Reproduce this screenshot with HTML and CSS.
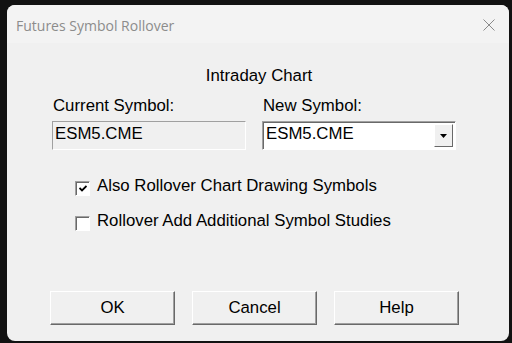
FILE: index.html
```html
<!DOCTYPE html>
<html lang="en">
<head>
  <meta charset="UTF-8" />
  <title>Futures Symbol Rollover</title>
  <link rel="stylesheet" href="styles.css">
</head>
<body>
  <div class="window">
    <div class="titlebar">
      <span class="title">Futures Symbol Rollover</span>
      <svg class="close" width="12" height="12" viewBox="0 0 12 12">
        <path d="M0.5 0.5 L11.5 11.5 M11.5 0.5 L0.5 11.5" stroke="#8a8a8a" stroke-width="1" fill="none"/>
      </svg>
    </div>
    <div class="content">
      <div class="heading">Intraday Chart</div>
      <div class="symbols">
        <div class="field">
          <label>Current Symbol:</label>
          <div class="readonly">ESM5.CME</div>
        </div>
        <div class="field">
          <label>New Symbol:</label>
          <div class="combo">
            <span>ESM5.CME</span>
            <div class="drop">
              <svg width="8" height="4" viewBox="0 0 8 4"><path d="M0 0 H7 L3.5 4 Z" fill="#000"/></svg>
            </div>
          </div>
        </div>
      </div>
      <div class="checks">
        <div class="check">
          <span class="box">
            <svg width="8" height="7" viewBox="0 0 8 7"><path d="M0.5 3 L3 5.5 L7.5 1" stroke="#000" stroke-width="1.8" fill="none"/></svg>
          </span>
          Also Rollover Chart Drawing Symbols
        </div>
        <div class="check">
          <span class="box"></span>
          Rollover Add Additional Symbol Studies
        </div>
      </div>
      <div class="buttons">
        <button>OK</button>
        <button>Cancel</button>
        <button>Help</button>
      </div>
    </div>
  </div>
</body>
</html>
```
FILE: styles.css
```css
html, body {
  margin: 0;
  background: #121212;
}
body {
  width: 512px;
  height: 343px;
  overflow: hidden;
}
.window {
  margin: 5px 0 0 7px;
  width: 502px;
  height: 336px;
  border-radius: 8px;
  background: #f0f0f0;
  overflow: hidden;
  font-family: "Liberation Sans", Arial, sans-serif;
  font-size: 16.8px;
  color: #000;
}
.titlebar {
  height: 38px;
  background: #f3f3f3;
  display: flex;
  align-items: center;
  justify-content: space-between;
  padding: 0 14px 0 9px;
}
.title {
  font-family: "Open Sans", "Noto Sans", sans-serif;
  font-size: 14px;
  color: #8c8c8c;
  margin-top: 2px;
}
.close { margin-top: 1px; }
.content {
  padding: 23px 0 0 45px;
}
.heading {
  text-align: center;
  width: 414px;
  line-height: 20px;
}
.symbols {
  display: flex;
  gap: 16px;
  margin-top: 10px;
}
.field label {
  display: block;
  line-height: 20px;
  padding-left: 1px;
}
.readonly, .combo {
  margin-top: 5px;
  width: 194px;
  height: 29px;
  box-sizing: border-box;
  padding: 2px 0 0 2px;
  line-height: 20px;
}
.readonly {
  border-top: 1px solid #a0a0a0;
  border-left: 1px solid #a0a0a0;
  border-right: 1px solid #fff;
  border-bottom: 1px solid #fff;
}
.combo {
  display: flex;
  justify-content: space-between;
  background: #fff;
  border: 1px solid;
  border-color: #a0a0a0 #fff #fff #a0a0a0;
  box-shadow: inset 1px 1px 0 #696969;
  padding: 2px 2px 2px 3px;
}
.drop {
  width: 19px;
  height: 23px;
  box-sizing: border-box;
  background: #f0f0f0;
  border: 1px solid;
  border-color: #fff #696969 #696969 #fff;
  display: flex;
  align-items: center;
  justify-content: center;
}
.checks {
  margin-top: 26px;
  padding-left: 23px;
  display: flex;
  flex-direction: column;
  gap: 15px;
}
.check {
  display: flex;
  align-items: center;
  gap: 7px;
  line-height: 20px;
}
.box {
  width: 15px;
  height: 15px;
  box-sizing: border-box;
  background: #fff;
  border: 1px solid;
  border-color: #a0a0a0 #fff #fff #a0a0a0;
  box-shadow: inset 1px 1px 0 #696969;
  display: flex;
  align-items: center;
  justify-content: center;
  padding: 1px 0 0 1px;
  margin-top: 4px;
}
.buttons {
  display: flex;
  gap: 17px;
  margin-top: 60px;
  margin-left: -2px;
}
button {
  width: 125px;
  height: 34px;
  font-family: inherit;
  font-size: 16.8px;
  color: #000;
  background: #f0f0f0;
  border: 1px solid;
  border-color: #fff #696969 #696969 #fff;
  box-shadow: inset -1px -1px 0 #a0a0a0;
  padding: 0;
}
```
